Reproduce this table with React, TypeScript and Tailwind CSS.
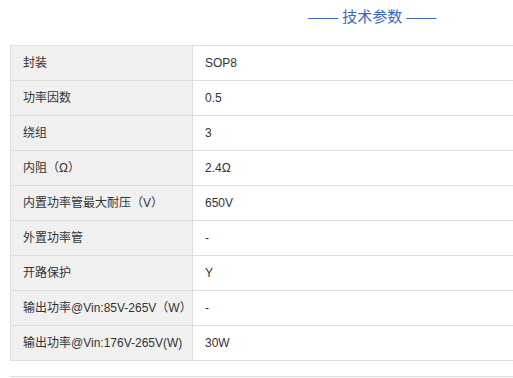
import React from "react";

const rows: [string, string][] = [
  ["封装", "SOP8"],
  ["功率因数", "0.5"],
  ["绕组", "3"],
  ["内阻（Ω）", "2.4Ω"],
  ["内置功率管最大耐压（V）", "650V"],
  ["外置功率管", "-"],
  ["开路保护", "Y"],
  ["输出功率@Vin:85V-265V（W）", "-"],
  ["输出功率@Vin:176V-265V(W)", "30W"],
];

export default function App() {
  return (
    <div
      className="w-[513px] h-[378px] overflow-hidden bg-white"
      style={{ fontFamily: '"Liberation Sans", Arial, "Noto Sans CJK SC", sans-serif' }}
    >
      <div className="h-[45px] flex items-start">
        <div className="ml-[308px] mt-[6px] text-[15px] leading-[22px] text-[#3a66c4] whitespace-nowrap">
          —— 技术参数 ——
        </div>
      </div>
      <div className="ml-[10px] w-[560px]">
        <table className="w-full border-collapse text-[12px] text-[#333]">
          <tbody>
            {rows.map(([k, v], i) => (
              <tr key={i} className="h-[35px]">
                <td className="w-[182px] bg-[#f0f0f0] border border-[#dddddd] pl-[12px] p-0 whitespace-nowrap">
                  {k}
                </td>
                <td className="border border-[#dddddd] pl-[12px] p-0">{v}</td>
              </tr>
            ))}
          </tbody>
        </table>
        <div className="mt-[15px] border-t border-[#dddddd]" />
      </div>
    </div>
  );
}
